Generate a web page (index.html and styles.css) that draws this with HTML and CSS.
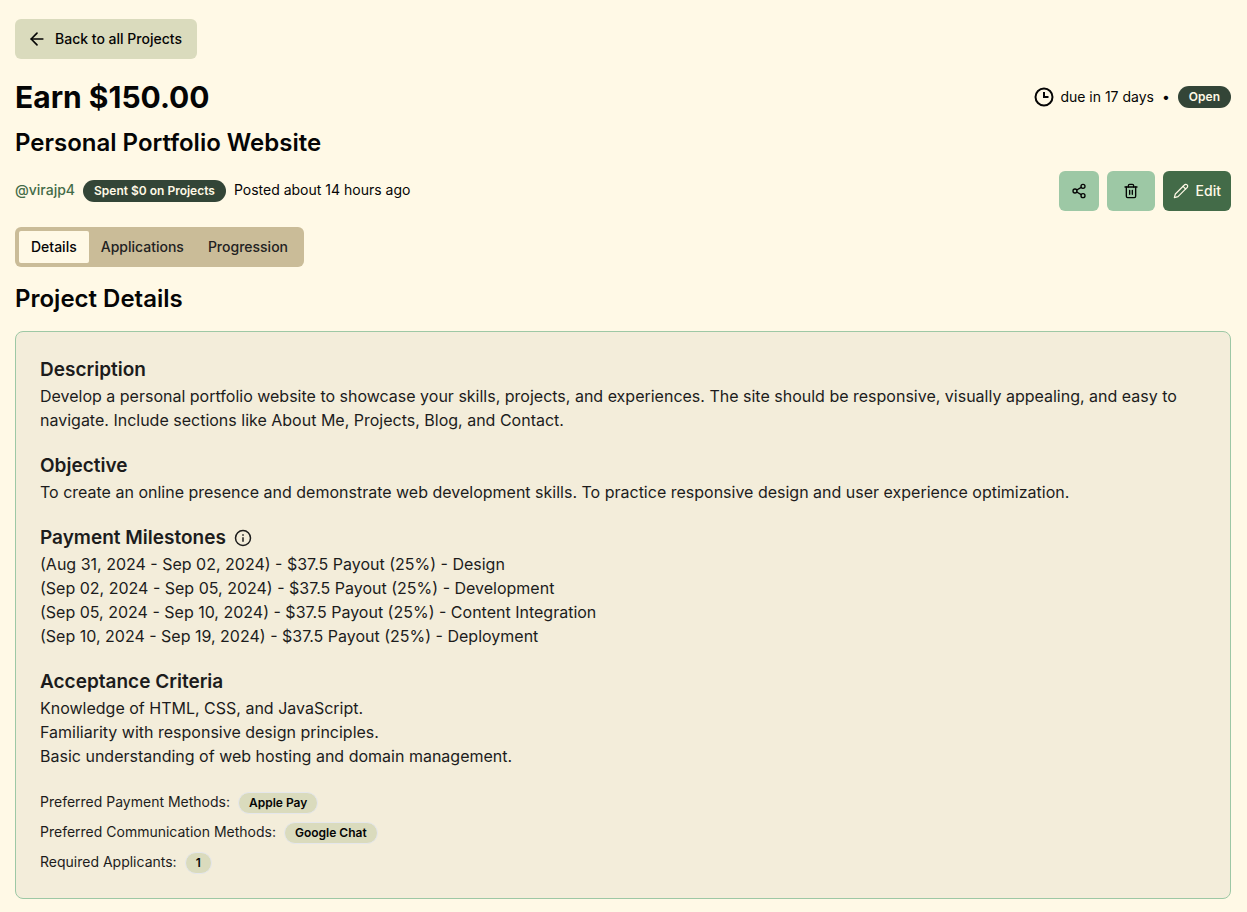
FILE: index.html
```html
<!DOCTYPE html>
<html lang="en">
<head>
    <meta charset="UTF-8">
    <title>Personal Portfolio Website</title>
    <meta name="viewport" content="width=device-width, initial-scale=1">
    <link rel="stylesheet" href="styles.css">
</head>
<body>
    <main class="page">
        <a class="btn btn-back" href="#">
            <svg class="icon-back" viewBox="0 0 24 24" fill="none" stroke="currentColor" stroke-width="2" stroke-linecap="round" stroke-linejoin="round"><path d="m12 19-7-7 7-7"/><path d="M19 12H5"/></svg>
            Back to all Projects
        </a>

        <header class="row earn-row">
            <h1>Earn $150.00</h1>
            <div class="status">
                <svg class="icon-clock" viewBox="0 0 24 24" fill="none" stroke="currentColor" stroke-width="2"><circle cx="12" cy="12" r="8.500"/><path d="M12 7v5h4.500"/></svg>
                <span>due in 17 days</span>
                <span class="dot">•</span>
                <span class="badge badge-dark">Open</span>
            </div>
        </header>

        <h2 class="title">Personal Portfolio Website</h2>

        <div class="row meta-row">
            <div class="meta">
                <a class="user" href="#">@virajp4</a>
                <span class="badge badge-dark">Spent $0 on Projects</span>
                <span>Posted about 14 hours ago</span>
            </div>
            <div class="actions">
                <button class="btn btn-icon" type="button" aria-label="Share">
                    <svg class="icon" viewBox="0 0 24 24" fill="none" stroke="currentColor" stroke-width="2" stroke-linecap="round" stroke-linejoin="round"><circle cx="18" cy="5" r="3"/><circle cx="6" cy="12" r="3"/><circle cx="18" cy="19" r="3"/><path d="m8.590 13.510 6.830 3.980M15.410 6.510l-6.820 3.980"/></svg>
                </button>
                <button class="btn btn-icon btn-delete" type="button" aria-label="Delete">
                    <svg class="icon" viewBox="0 0 24 24" fill="none" stroke="currentColor" stroke-width="2" stroke-linecap="round" stroke-linejoin="round"><path d="M3 6h18"/><path d="M19 6v14c0 1-1 2-2 2H7c-1 0-2-1-2-2V6"/><path d="M8 6V4c0-1 1-2 2-2h4c1 0 2 1 2 2v2"/><path d="M10 11v6M14 11v6"/></svg>
                </button>
                <button class="btn btn-edit" type="button">
                    <svg class="icon" viewBox="0 0 24 24" fill="none" stroke="currentColor" stroke-width="1.800" stroke-linecap="round" stroke-linejoin="round"><path d="M17 3a2.850 2.830 0 1 1 4 4L7.500 20.500 2 22l1.500-5.500Z"/><path d="m15 5 4 4"/></svg>
                    Edit
                </button>
            </div>
        </div>

        <div class="tabs" role="tablist">
            <button class="tab active" type="button" role="tab" aria-selected="true">Details</button>
            <button class="tab" type="button" role="tab" aria-selected="false">Applications</button>
            <button class="tab" type="button" role="tab" aria-selected="false">Progression</button>
        </div>

        <h2 class="details-title">Project Details</h2>

        <div class="card">
            <section>
                <h3>Description</h3>
                <p>Develop a personal portfolio website to showcase your skills, projects, and experiences. The site should be responsive, visually appealing, and easy to navigate. Include sections like About Me, Projects, Blog, and Contact.</p>
            </section>
            <section>
                <h3>Objective</h3>
                <p>To create an online presence and demonstrate web development skills. To practice responsive design and user experience optimization.</p>
            </section>
            <section>
                <h3>Payment Milestones
                    <svg class="icon-info" viewBox="0 0 24 24" fill="none" stroke="currentColor" stroke-width="2"><circle cx="12" cy="12" r="10"/><path d="M12 11v6M12 7v2"/></svg>
                </h3>
                <p>(Aug 31, 2024 - Sep 02, 2024) - $37.5 Payout (25%) - Design</p>
                <p>(Sep 02, 2024 - Sep 05, 2024) - $37.5 Payout (25%) - Development</p>
                <p>(Sep 05, 2024 - Sep 10, 2024) - $37.5 Payout (25%) - Content Integration</p>
                <p>(Sep 10, 2024 - Sep 19, 2024) - $37.5 Payout (25%) - Deployment</p>
            </section>
            <section>
                <h3>Acceptance Criteria</h3>
                <p>Knowledge of HTML, CSS, and JavaScript.</p>
                <p>Familiarity with responsive design principles.</p>
                <p>Basic understanding of web hosting and domain management.</p>
            </section>
            <div class="prefs">
                <div class="pref">Preferred Payment Methods: <span class="badge badge-light">Apple Pay</span></div>
                <div class="pref">Preferred Communication Methods: <span class="badge badge-light">Google Chat</span></div>
                <div class="pref">Required Applicants: <span class="badge badge-light">1</span></div>
            </div>
        </div>
    </main>
</body>
</html>
```
FILE: styles.css
```css
* {
  box-sizing: border-box;
}

body {
  margin: 0;
  background-color: #fff9e6;
  color: #050505;
  font-family: Inter, "Liberation Sans", sans-serif;
  font-size: 14px;
  line-height: 20px;
}

h1, h2, h3, p {
  margin: 0;
}

.page {
  padding: 19px 16px 13px 15px;
}

.row {
  display: flex;
  align-items: center;
  justify-content: space-between;
}

/* buttons */
.btn {
  display: inline-flex;
  align-items: center;
  justify-content: center;
  height: 40px;
  border: none;
  border-radius: 6px;
  color: #050505;
  font-family: inherit;
  font-size: 14px;
  font-weight: 500;
  line-height: 20px;
  text-decoration: none;
  cursor: pointer;
}

.btn-back {
  gap: 8px;
  padding: 0 15px 0 12px;
  background-color: #dadbbd;
}

.btn-icon {
  width: 40px;
  padding: 0;
  background-color: #9dc8a5;
}

.btn-delete {
  width: 48px;
}

.btn-edit {
  gap: 7px;
  padding: 0 10px;
  background-color: #436b48;
  color: #fff9e6;
}

.icon {
  width: 16px;
  height: 16px;
}

.icon-info {
  width: 18px;
  height: 18px;
}

.icon-back {
  width: 20px;
  height: 20px;
}

/* heading */
.earn-row {
  margin-top: 20px;
}

h1 {
  font-size: 30px;
  font-weight: 700;
  line-height: 36px;
}

.status {
  display: flex;
  align-items: center;
}

.icon-clock {
  width: 24px;
  height: 24px;
  margin-right: 4px;
}

.dot {
  margin: 0 8px;
}

h2 {
  font-size: 24px;
  font-weight: 600;
  line-height: 32px;
}

.title {
  margin-top: 12px;
}

.meta-row {
  margin-top: 12px;
}

.meta,
.actions {
  display: flex;
  align-items: flex-start;
  gap: 8px;
}

.user {
  color: #436b48;
  font-weight: 500;
  text-decoration: none;
}

.badge {
  display: inline-block;
  padding: 2px 10px;
  border: 1px solid transparent;
  border-radius: 11px;
  font-size: 12px;
  font-weight: 600;
  line-height: 16px;
}

.badge-dark {
  background-color: #334537;
  color: #fff9e6;
}

.badge-light {
  border-color: #e5e7eb;
  background-color: #dadbbd;
  color: #050505;
}

/* tabs */
.tabs {
  display: inline-flex;
  height: 40px;
  margin-top: 16px;
  padding: 4px;
  border-radius: 6px;
  background-color: #cabc98;
}

.tab {
  padding: 6px 12px;
  border: none;
  border-radius: 2px;
  background: none;
  color: #222;
  font-family: inherit;
  font-size: 14px;
  font-weight: 500;
  line-height: 20px;
  cursor: pointer;
}

.tab.active {
  background-color: #fff9e6;
  color: #050505;
}

.details-title {
  margin-top: 16px;
}

/* details card */
.card {
  margin-top: 16px;
  padding: 24px;
  border: 1px solid #9dc8a5;
  border-radius: 8px;
  background-color: #f3edda;
  color: #1c1c1c;
  font-size: 16px;
  line-height: 24px;
}

.card section {
  margin-bottom: 20px;
}

h3 {
  display: flex;
  align-items: center;
  gap: 8px;
  font-size: 19px;
  font-weight: 600;
  line-height: 28px;
}

.prefs {
  display: flex;
  flex-direction: column;
  gap: 8px;
  margin-top: 24px;
  font-size: 14px;
  line-height: 20px;
}

.pref {
  display: flex;
  align-items: flex-start;
  gap: 8px;
}
```
